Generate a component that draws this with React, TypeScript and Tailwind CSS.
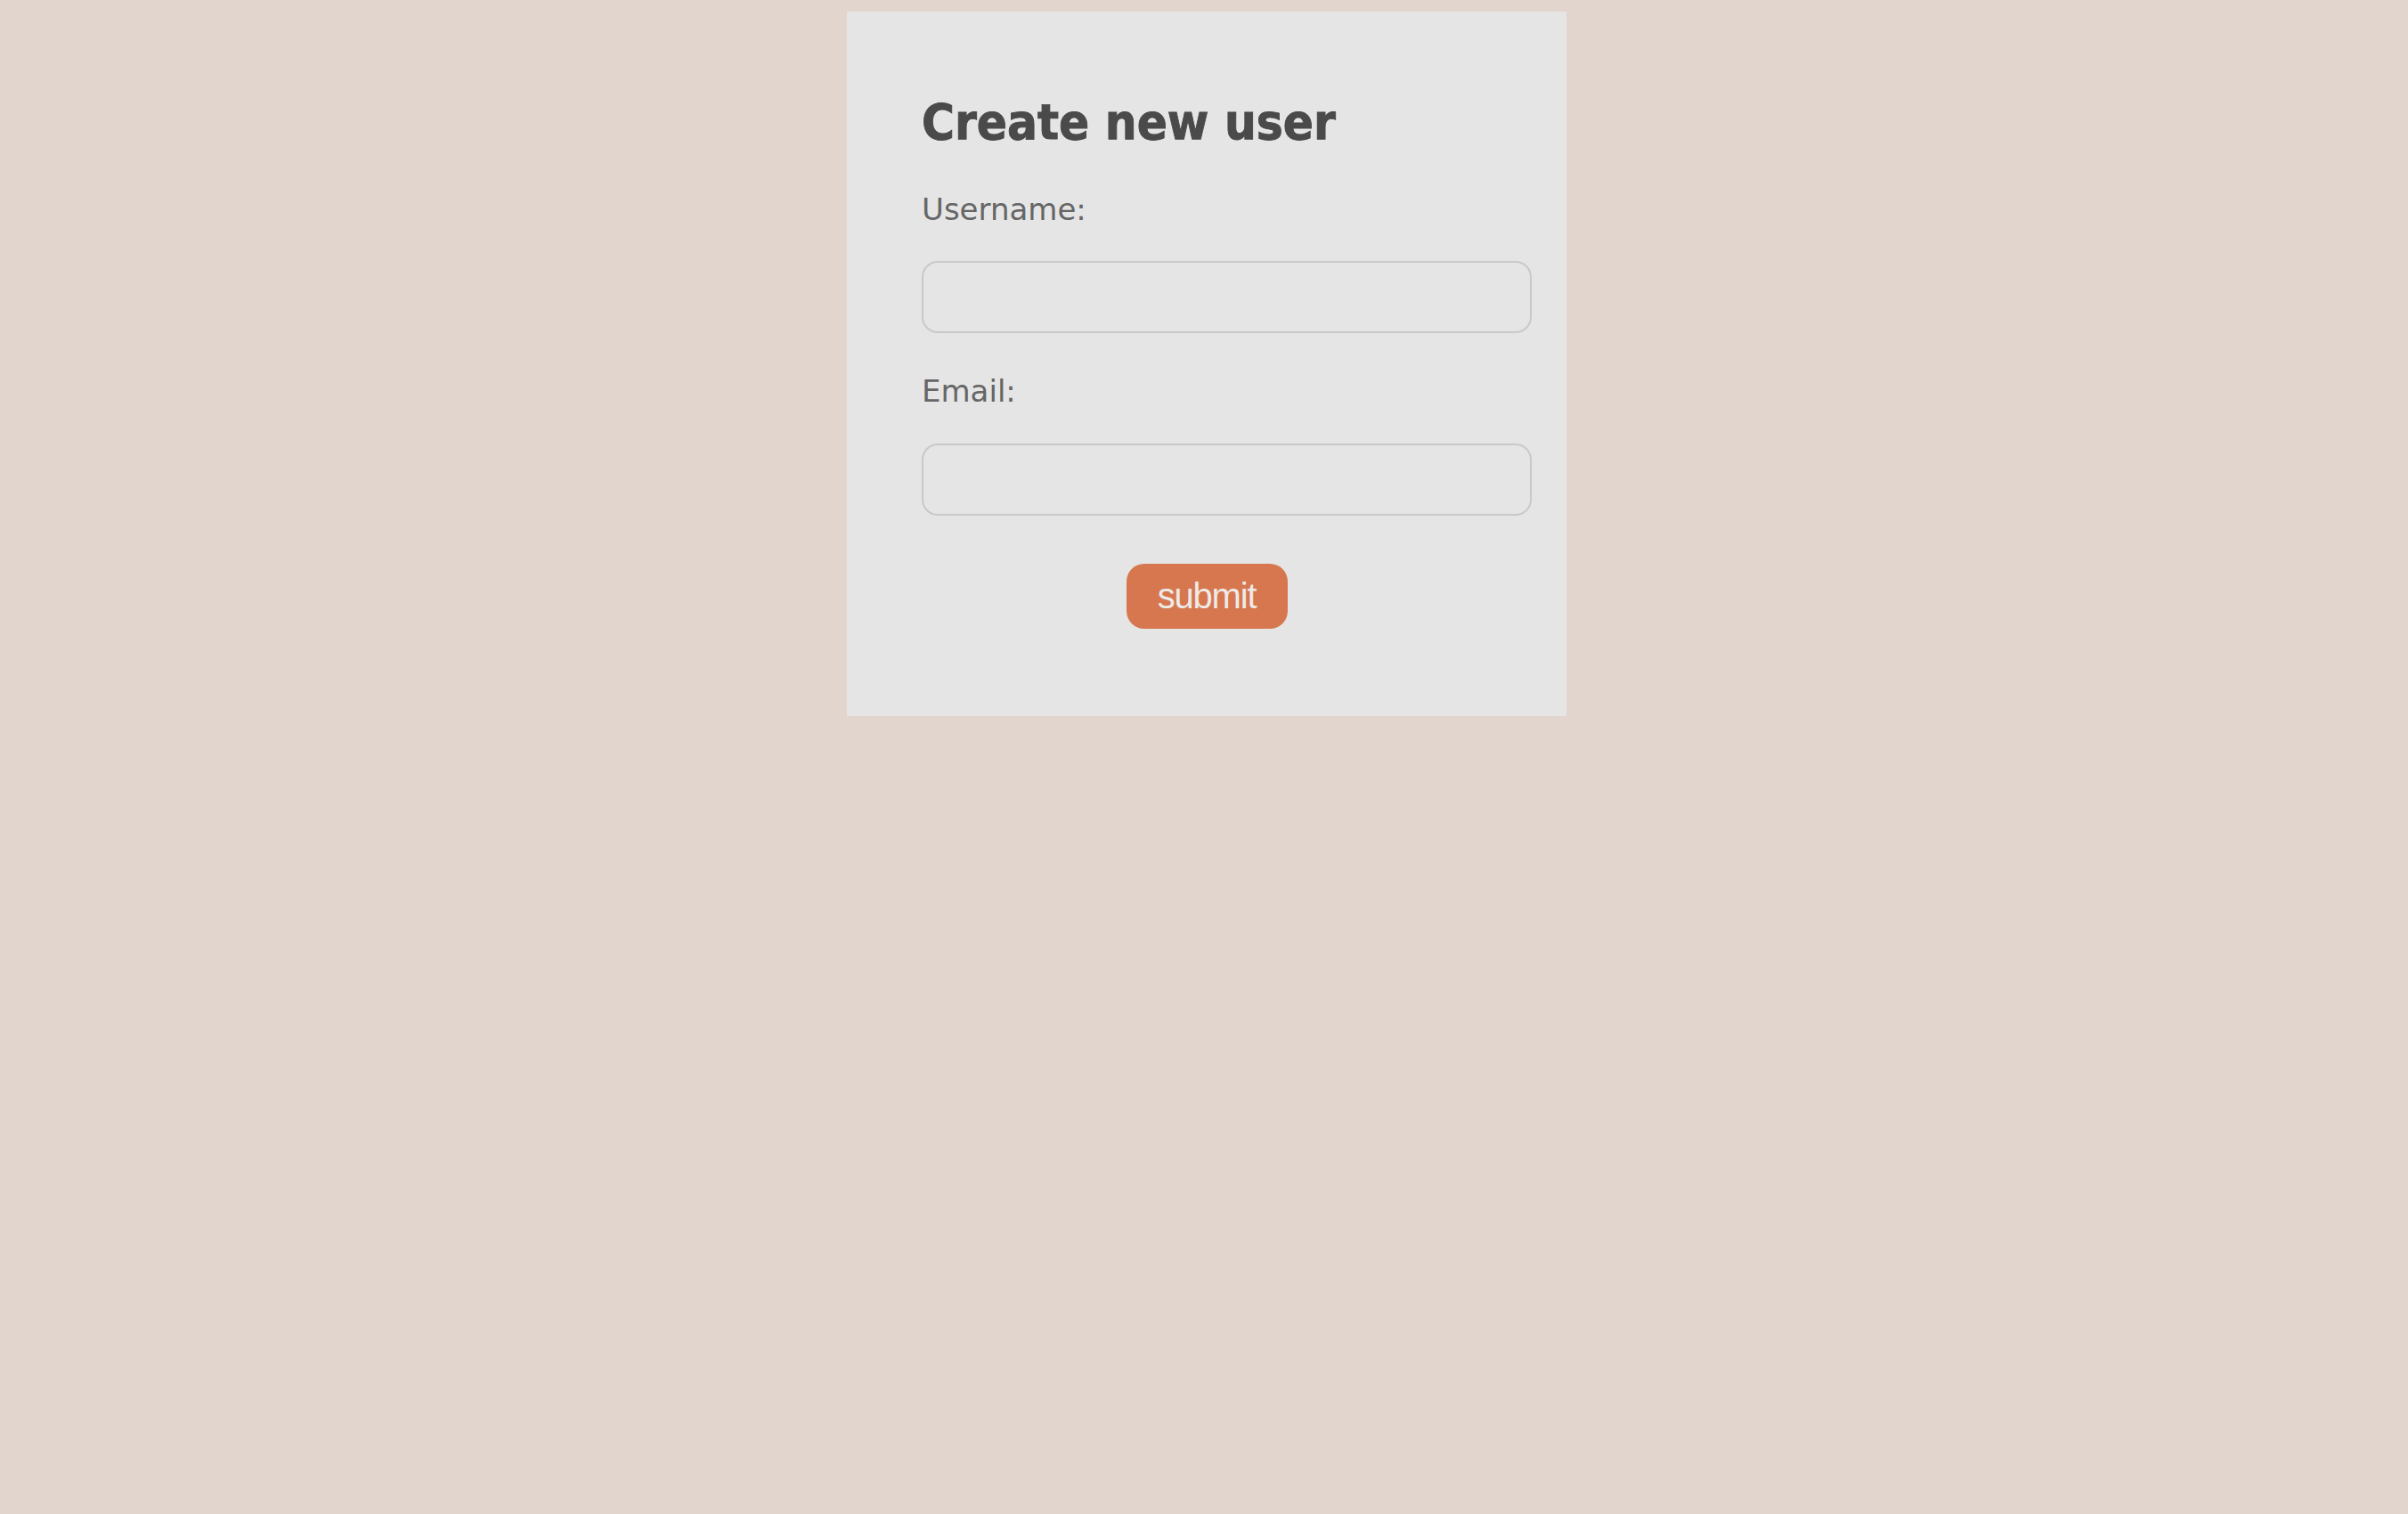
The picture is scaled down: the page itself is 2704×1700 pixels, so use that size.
import React from "react";

export default function App() {
  return (
    <div className="min-h-[1700px] w-full bg-[#e2d5cd] pt-[13px] pl-[6px] flex justify-center items-start">
      <div className="w-[808px] bg-[#e5e5e5] pl-[84px] pr-[39px] pt-[96px] pb-[98px]">
        <h1
          className="m-0 text-[56px] leading-[56px] font-bold text-[#4a4a4a] [-webkit-text-stroke:0.9px_#4a4a4a]"
          style={{ fontFamily: '"DejaVu Sans Condensed", "DejaVu Sans", sans-serif', fontStretch: "condensed" }}
        >
          Create new user
        </h1>
        <form className="flex flex-col" onSubmit={(e) => e.preventDefault()}>
          <label className="mt-[53px] text-[34px] leading-[34px] text-[#666666] font-['DejaVu_Sans',sans-serif]">
            Username:
          </label>
          <input
            type="text"
            className="mt-[41px] h-[81px] w-[685px] rounded-[18px] border-2 border-[#c9c9c9] bg-[#e5e5e5] outline-none"
          />
          <label className="mt-[48px] text-[34px] leading-[34px] text-[#666666] font-['DejaVu_Sans',sans-serif]">
            Email:
          </label>
          <input
            type="email"
            className="mt-[42px] h-[81px] w-[685px] rounded-[18px] border-2 border-[#c9c9c9] bg-[#e5e5e5] outline-none"
          />
          <div className="mt-[54px] flex w-[640px] justify-center">
            <button
              type="submit"
              className="flex h-[73px] w-[181px] items-center justify-center rounded-[20px] bg-[#d67750] pb-[2px] text-[40px] tracking-[-1.2px] text-[#eeeae6] font-['Liberation_Sans',Arial,sans-serif]"
            >
              submit
            </button>
          </div>
        </form>
      </div>
    </div>
  );
}
